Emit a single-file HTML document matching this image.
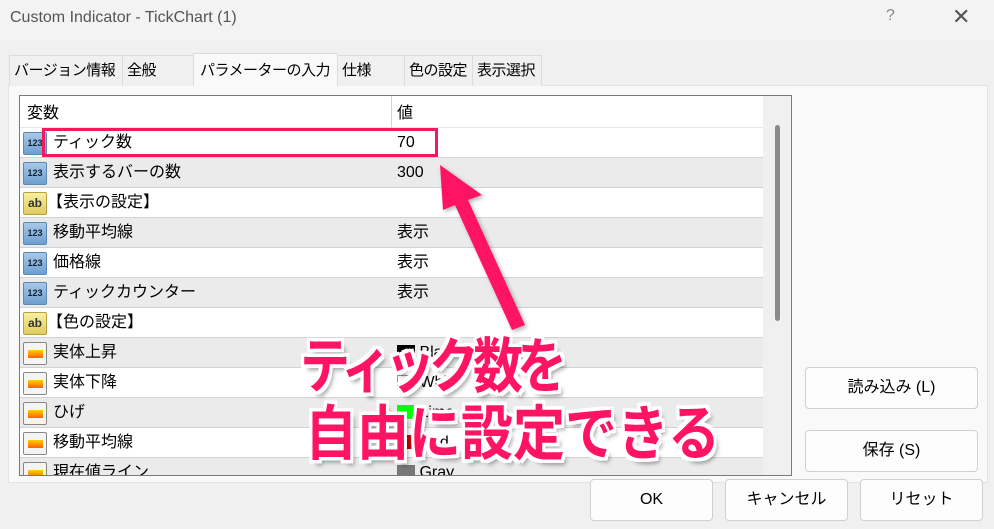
<!DOCTYPE html>
<html><head><meta charset="utf-8"><style>
*{margin:0;padding:0;box-sizing:border-box}
body{width:994px;height:529px;overflow:hidden;background:#f0f0f0;font-family:"Liberation Sans","Noto Sans CJK JP",sans-serif;font-size:15px;color:#000;position:relative}
.abs{position:absolute}
.title{left:0;top:0;width:994px;height:40px;background:#f3f3f3;}
.title span{position:absolute;left:10px;top:9px;font-size:16px;color:#555}
.tab{position:absolute;top:55px;height:31px;background:#f0f0f0;border:1px solid #dcdcdc;border-bottom:none;font-size:15px;line-height:30px;padding-left:4px;white-space:nowrap;overflow:hidden;letter-spacing:-0.5px}
.panel{left:8px;top:85px;width:980px;height:398px;background:#f9f9f9;border:1px solid #e3e3e3}
.list{left:19px;top:95px;width:773px;height:381px;background:#fff;border:1px solid #7a7a7a;overflow:hidden}
.row{position:absolute;left:0;width:743px;height:30px;border-bottom:1px solid #d2d2d2}
.row .n{position:absolute;left:33px;top:0;line-height:29px;font-size:16px}
.row .v{position:absolute;left:377px;top:0;line-height:29px;font-size:16px}
.row .ic{position:absolute;left:3px;top:4px;width:24px;height:23px;border-radius:2px}
.num{background:linear-gradient(#a8c8e8,#6e9fd0);border:1px solid #5a88b8;font:bold 9px "Liberation Sans",sans-serif;color:#123;text-align:center;line-height:21px}
.ab{background:linear-gradient(#f8f0a0,#e0cc60);border:1px solid #b8a040;font:bold 12px "Liberation Sans",sans-serif;color:#333;text-align:center;line-height:20px}
.col{background:#f4f4f4;border:1px solid #888}
.col i{position:absolute;left:4px;top:7px;width:15px;height:8px;background:linear-gradient(#ffd000,#ff6000)}
.btn{position:absolute;background:#fdfdfd;border:1px solid #d0d0d0;border-radius:4px;text-align:center;font-size:16px}
.big{position:absolute;font-weight:bold;color:#ff1464;text-shadow:3px 3px 0 #fff,-3px -3px 0 #fff,3px -3px 0 #fff,-3px 3px 0 #fff,0 3px 0 #fff,3px 0 0 #fff,-3px 0 0 #fff,0 -3px 0 #fff,4px 5px 4px rgba(0,0,0,.35);white-space:nowrap;line-height:1;transform-origin:0 0}
</style></head><body>
<div class="abs title"><span>Custom Indicator - TickChart (1)</span><span style="left:886px;top:7px;color:#888">?</span><span style="left:952px;top:4px;font-size:22px;color:#555">✕</span></div>
<div class="abs panel"></div>
<div class="tab" style="left:9px;width:114px">バージョン情報</div>
<div class="tab" style="left:122px;width:72px">全般</div>
<div class="tab" style="left:337px;width:68px">仕様</div>
<div class="tab" style="left:404px;width:69px">色の設定</div>
<div class="tab" style="left:472px;width:70px">表示選択</div>
<div class="tab" style="left:193px;width:145px;top:53px;height:33px;background:#f9f9f9;line-height:34px;padding-left:6px">パラメーターの入力</div>
<div class="abs list">
<div class="row" style="top:0;height:32px;border-bottom:1px solid #e6e6e6"><span class="n" style="left:7px;line-height:36px">変数</span><span class="v" style="line-height:36px">値</span></div>
<div class="abs" style="left:371px;top:0;width:1px;height:381px;background:#d2d2d2"></div>
<div class="row" style="top:32px;background:#fff"><div class="ic num">123</div><span class="n">ティック数</span><span class="v">70</span></div>
<div class="row" style="top:62px;background:#ebebeb"><div class="ic num">123</div><span class="n">表示するバーの数</span><span class="v">300</span></div>
<div class="row" style="top:92px;background:#fff"><div class="ic ab">ab</div><span class="n" style="left:27px">【表示の設定】</span></div>
<div class="row" style="top:122px;background:#ebebeb"><div class="ic num">123</div><span class="n">移動平均線</span><span class="v">表示</span></div>
<div class="row" style="top:152px;background:#fff"><div class="ic num">123</div><span class="n">価格線</span><span class="v">表示</span></div>
<div class="row" style="top:182px;background:#ebebeb"><div class="ic num">123</div><span class="n">ティックカウンター</span><span class="v">表示</span></div>
<div class="row" style="top:212px;background:#fff"><div class="ic ab">ab</div><span class="n" style="left:27px">【色の設定】</span></div>
<div class="row" style="top:242px;background:#ebebeb"><div class="ic col"><i></i></div><span class="n">実体上昇</span><span class="v"><b style="display:inline-block;width:18px;height:14px;background:#000;vertical-align:-2px"></b> Black</span></div>
<div class="row" style="top:272px;background:#fff"><div class="ic col"><i></i></div><span class="n">実体下降</span><span class="v"><b style="display:inline-block;width:18px;height:14px;background:#fff;border:1px solid #999;vertical-align:-2px"></b> White</span></div>
<div class="row" style="top:302px;background:#ebebeb"><div class="ic col"><i></i></div><span class="n">ひげ</span><span class="v"><b style="display:inline-block;width:18px;height:14px;background:#0f0;vertical-align:-2px"></b> Lime</span></div>
<div class="row" style="top:332px;background:#fff"><div class="ic col"><i></i></div><span class="n">移動平均線</span><span class="v"><b style="display:inline-block;width:18px;height:14px;background:#c00;vertical-align:-2px"></b> Red</span></div>
<div class="row" style="top:362px;background:#ebebeb"><div class="ic col"><i></i></div><span class="n">現在値ライン</span><span class="v"><b style="display:inline-block;width:18px;height:14px;background:#777;vertical-align:-2px"></b> Gray</span></div>
<div class="abs" style="left:743px;top:0;width:29px;height:381px;background:#f0f0f0"></div>
<div class="abs" style="left:755px;top:29px;width:5px;height:196px;background:#8a8a8a;border-radius:3px"></div>
</div>
<div class="abs" style="left:42px;top:128px;width:396px;height:29px;border:3px solid #f21a5e"></div>
<svg class="abs" style="left:0;top:0" width="994" height="529"><polygon points="440,165 482,195 468,200 525,325 512,330 455,205 443,210" fill="#ff1464" filter="drop-shadow(2px 2px 2px rgba(0,0,0,.3))"/></svg>
<div class="big" style="left:300px;top:337px;font-size:50px;letter-spacing:-6px;transform:scaleY(1.2)">ティック数を</div>
<div class="big" style="left:305px;top:405px;font-size:52px;letter-spacing:0;transform:scaleY(1.15)">自由に設定できる</div>
<div class="btn" style="left:805px;top:367px;width:173px;height:42px;line-height:40px">読み込み (L)</div>
<div class="btn" style="left:805px;top:430px;width:173px;height:42px;line-height:40px">保存 (S)</div>
<div class="btn" style="left:590px;top:479px;width:123px;height:42px;line-height:40px">OK</div>
<div class="btn" style="left:725px;top:479px;width:123px;height:42px;line-height:40px">キャンセル</div>
<div class="btn" style="left:860px;top:479px;width:123px;height:42px;line-height:40px">リセット</div>
</body></html>
